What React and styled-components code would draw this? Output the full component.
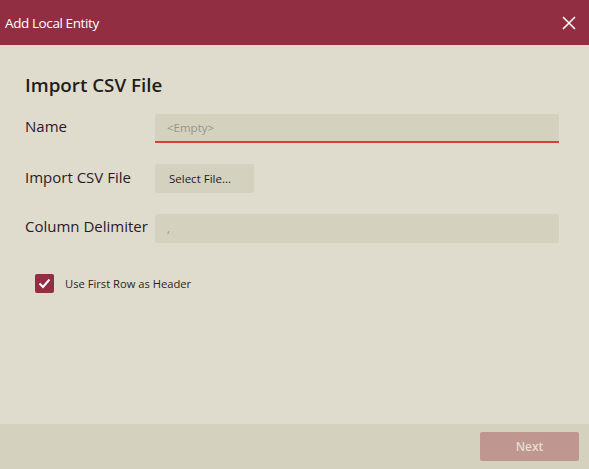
import React from "react";
import styled, { createGlobalStyle } from "styled-components";

const Global = createGlobalStyle`
  html, body { margin: 0; padding: 0; }
  body { font-family: "Open Sans", "Noto Sans", sans-serif; background: #dfdccd; }
  * { box-sizing: border-box; }
`;

const Dialog = styled.div`
  width: 589px;
  height: 469px;
  display: flex;
  flex-direction: column;
  background: #dfdccd;
`;

const Header = styled.div`
  height: 45px;
  background: #922e41;
  display: flex;
  align-items: center;
  justify-content: space-between;
  padding: 0 12px 0 5px;
`;

const Title = styled.div`
  color: #ffffff;
  font-size: 13.5px;
  letter-spacing: -0.4px;
`;

const Close = styled.button`
  width: 16px;
  height: 16px;
  padding: 0;
  border: none;
  background: transparent;
  display: flex;
  align-items: center;
  justify-content: center;
  cursor: pointer;
`;

const Body = styled.div`
  flex: 1;
  padding: 27px 30px 0 25px;
  display: flex;
  flex-direction: column;
`;

const Heading = styled.h2`
  margin: 0 0 16px;
  font-size: 18.8px;
  font-weight: 600;
  color: #221c1c;
  line-height: 26px;
`;

const Row = styled.div`
  display: flex;
  align-items: flex-start;
  height: 29px;
  margin-bottom: 21px;
`;

const Label = styled.div`
  width: 130px;
  font-size: 15px;
  color: #2a1a28;
  line-height: 20px;
  padding-top: ${(p) => p.$top || 0}px;
  white-space: nowrap;
`;

const Input = styled.div`
  flex: 1;
  height: 29px;
  background: #d5d1bf;
  border-bottom: ${(p) => (p.$error ? "2px solid #e0393e" : "none")};
  border-radius: ${(p) => (p.$error ? "2px 2px 0 0" : "2px")};
  padding: 0 12px;
  display: flex;
  align-items: center;
  font-size: 11.5px;
  color: #9a948a;
`;

const FileButton = styled.button`
  width: 99px;
  height: 29px;
  border: none;
  border-radius: 2px;
  background: #d5d1bf;
  font-family: inherit;
  font-size: 11.5px;
  color: #1f1a1a;
  text-align: left;
  padding: 0 14px;
`;

const CheckRow = styled.label`
  display: flex;
  align-items: center;
  gap: 11px;
  margin: 10px 0 0 10px;
  font-size: 11.2px;
  color: #2a1f22;
`;

const Box = styled.span`
  width: 19px;
  height: 19px;
  border-radius: 2px;
  background: #922e41;
  display: flex;
  align-items: center;
  justify-content: center;
`;

const Footer = styled.div`
  height: 45px;
  background: #d5d1bf;
  display: flex;
  align-items: center;
  justify-content: flex-end;
  padding: 0 10px;
`;

const NextButton = styled.button`
  width: 99px;
  height: 29px;
  border: none;
  border-radius: 2px;
  background: #bf9690;
  color: #e6ddd2;
  font-family: inherit;
  font-size: 12px;
  font-weight: 600;
`;

export default function App() {
  return (
    <>
      <Global />
      <Dialog>
        <Header>
          <Title>Add Local Entity</Title>
          <Close aria-label="Close">
            <svg width="14" height="14" viewBox="0 0 14 14">
              <path d="M1 1 L13 13 M13 1 L1 13" stroke="#fff" strokeWidth="1.6" />
            </svg>
          </Close>
        </Header>
        <Body>
          <Heading>Import CSV File</Heading>
          <Row>
            <Label $top={2}>Name</Label>
            <Input $error>&lt;Empty&gt;</Input>
          </Row>
          <Row>
            <Label $top={3}>Import CSV File</Label>
            <FileButton>Select File...</FileButton>
          </Row>
          <Row>
            <Label $top={2}>Column Delimiter</Label>
            <Input>,</Input>
          </Row>
          <CheckRow>
            <Box>
              <svg width="13" height="11" viewBox="0 0 13 11">
                <path d="M1.5 5.5 L5 9 L11.5 1.5" stroke="#fff" strokeWidth="2" fill="none" />
              </svg>
            </Box>
            Use First Row as Header
          </CheckRow>
        </Body>
        <Footer>
          <NextButton>Next</NextButton>
        </Footer>
      </Dialog>
    </>
  );
}
